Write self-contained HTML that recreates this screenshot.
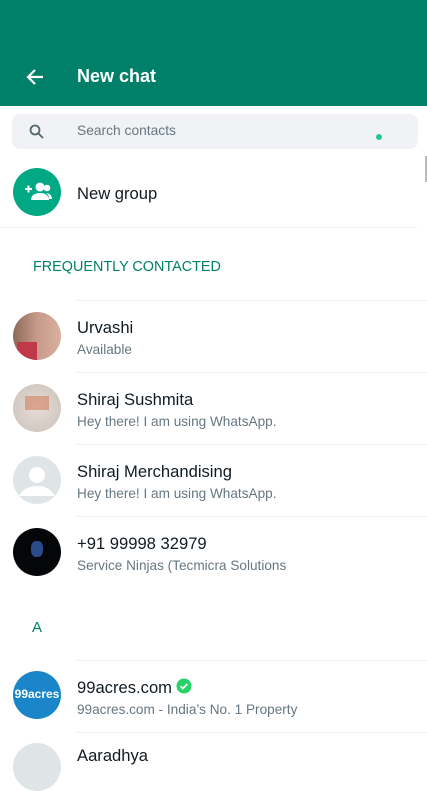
<!DOCTYPE html>
<html><head><meta charset="utf-8"><style>
*{margin:0;padding:0;box-sizing:border-box}
body{width:427px;height:754px;overflow:hidden;background:#fff;font-family:"Liberation Sans",sans-serif;position:relative}
.hdr{position:absolute;left:0;top:0;width:427px;height:106px;background:#008069}
.title{position:absolute;left:77px;top:66px;color:#fff;font-size:18px;font-weight:bold}
.search{position:absolute;left:12px;top:114px;width:406px;height:35px;background:#f0f2f5;border-radius:8px}
.search span{position:absolute;left:65px;top:9px;font-size:13.8px;color:#667781}
.av{position:absolute;left:13px;width:48px;height:48px;border-radius:50%;overflow:hidden}
.name{position:absolute;left:77px;font-size:16.6px;color:#111b21}
.sub{position:absolute;left:77px;font-size:13.6px;color:#667781}
.div{position:absolute;left:77px;right:0;height:1px;background:#e9edef}
.sec{position:absolute;left:33px;font-size:14.4px;color:#008069}
</style></head><body>
<div class="hdr"></div>
<svg style="position:absolute;left:25px;top:67px" width="20" height="20" viewBox="0 0 20 20"><path d="M18 10H3M10 3L3 10l7 7" stroke="#fff" stroke-width="2.2" fill="none"/></svg>
<div class="title">New chat</div>
<div class="search"><svg style="position:absolute;left:17px;top:10px" width="15" height="15" viewBox="0 0 15 15"><circle cx="6" cy="6" r="4.5" stroke="#54656f" stroke-width="1.8" fill="none"/><path d="M9.5 9.5L14 14" stroke="#54656f" stroke-width="1.8"/></svg><span>Search contacts</span><div style="position:absolute;left:364px;top:20px;width:6px;height:6px;border-radius:50%;background:#25c78c"></div></div>
<div style="position:absolute;left:425px;top:156px;width:2px;height:26px;background:#bbb"></div>
<div class="av" style="top:168px;background:#00a884"><svg width="48" height="48" viewBox="0 0 48 48"><circle cx="27" cy="19" r="4.5" fill="#fff"/><circle cx="34" cy="20" r="3.3" fill="#fff"/><path d="M18 32c0-5 4-7 9-7s9 2 9 7z" fill="#fff"/><path d="M33 25c3 0 6 2 6 6h-3c0-3-1-5-3-6z" fill="#fff"/><path d="M12 21h7M15.5 17.5v7" stroke="#fff" stroke-width="2"/></svg></div>
<div class="name" style="top:184px">New group</div>
<div style="position:absolute;left:0;right:10px;top:227px;height:1px;background:#e9edef"></div>
<div class="sec" style="top:259px">FREQUENTLY CONTACTED</div>
<div class="div" style="top:300px"></div>
<div class="av" style="top:312px;background:linear-gradient(90deg,#8b6a5a,#c79a8a 50%,#d9b0a0)"><div style="position:absolute;left:4px;top:30px;width:20px;height:18px;background:#c0394a"></div></div>
<div class="name" style="top:318px">Urvashi</div><div class="sub" style="top:342px">Available</div>
<div class="div" style="top:372px"></div>
<div class="av" style="top:384px;background:radial-gradient(#e8ddd6,#c8c0ba)"><div style="position:absolute;left:12px;top:12px;width:24px;height:14px;background:#d08060;opacity:.6"></div></div>
<div class="name" style="top:390px">Shiraj Sushmita</div><div class="sub" style="top:414px">Hey there! I am using WhatsApp.</div>
<div class="div" style="top:444px"></div>
<div class="av" style="top:456px;background:#dfe5e7"><svg width="48" height="48"><circle cx="24" cy="19" r="8" fill="#fff"/><path d="M6 40c4-7 10-10 18-10s14 3 18 10" fill="#fff"/></svg></div>
<div class="name" style="top:462px">Shiraj Merchandising</div><div class="sub" style="top:486px">Hey there! I am using WhatsApp.</div>
<div class="div" style="top:516px"></div>
<div class="av" style="top:528px;background:#050608"><div style="position:absolute;left:18px;top:13px;width:12px;height:16px;border-radius:40%;background:#2a4a8a"></div></div>
<div class="name" style="top:534px">+91 99998 32979</div><div class="sub" style="top:558px">Service Ninjas (Tecmicra Solutions</div>
<div class="sec" style="top:619px;left:32px;font-size:15px">A</div>
<div class="div" style="top:660px"></div>
<div class="av" style="top:671px;background:#1a85c8;color:#fff;font-weight:bold;font-size:12px;text-align:center;line-height:46px">99acres</div>
<div class="name" style="top:678px">99acres.com</div>
<svg style="position:absolute;left:176px;top:678px" width="16" height="16" viewBox="0 0 16 16"><circle cx="8" cy="8" r="7.5" fill="#25d366"/><path d="M4.5 8.2l2.3 2.3 4.5-4.5" stroke="#fff" stroke-width="1.8" fill="none"/></svg>
<div class="sub" style="top:702px">99acres.com - India’s No. 1 Property</div>
<div class="div" style="top:732px"></div>
<div class="av" style="top:743px;background:#dfe5e7"></div>
<div class="name" style="top:746px">Aaradhya</div>
</body></html>
